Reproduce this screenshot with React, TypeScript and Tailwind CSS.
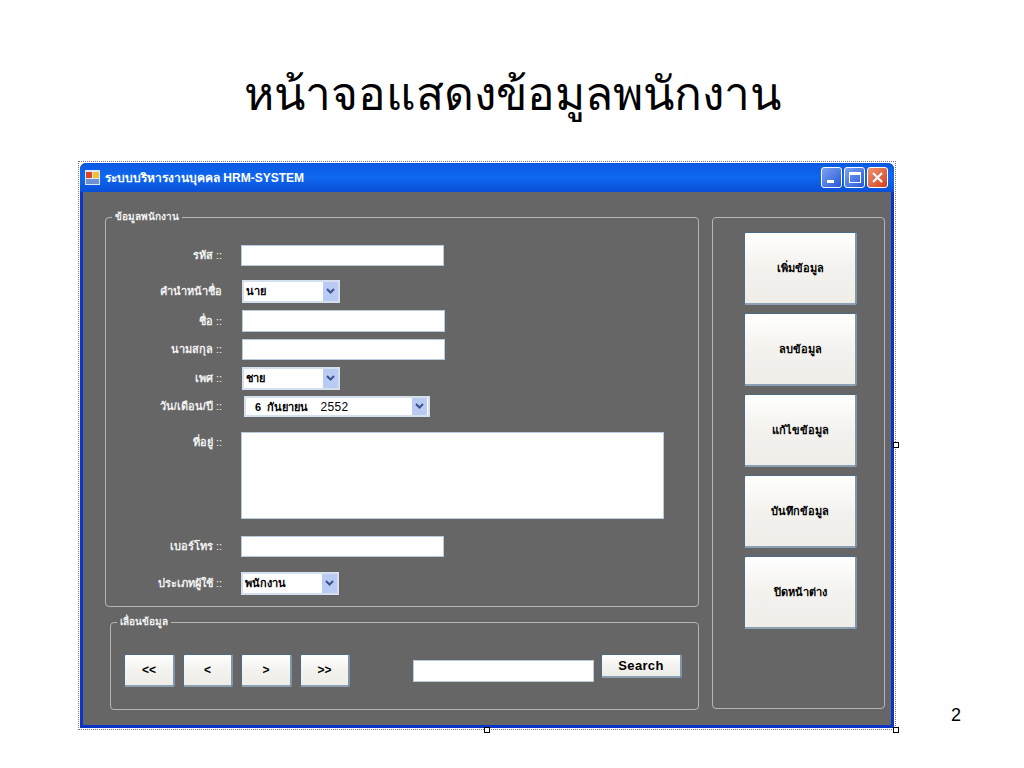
const thai = "font-['Liberation_Sans','Noto_Sans',sans-serif]";

function Chevron() {
  return (
    <svg width="11" height="9" viewBox="0 0 11 9" fill="none">
      <path d="M2 2l3.5 3.5L9 2" stroke="#3a5290" strokeWidth="2" />
    </svg>
  );
}

function TextBox({ className }: { className: string }) {
  return <input readOnly className={`block bg-white border border-[#b9cbe0] ${className}`} />;
}

function Select({ value, className }: { value: string; className: string }) {
  return (
    <div className={`flex items-center justify-between bg-white border-2 border-[#d5e0ee] text-[11px] font-bold text-black ${className}`}>
      <span className="pl-0.5">{value}</span>
      <span className="flex items-center justify-center w-[15px] h-[19px] bg-[#b9cbf2]">
        <Chevron />
      </span>
    </div>
  );
}

function Label({ text, className = "" }: { text: string; className?: string }) {
  return (
    <div className={`w-[116px] text-right text-[11px] font-bold text-[#f2f2f2] whitespace-nowrap ${className}`}>
      {text} <span className="font-normal">::</span>
    </div>
  );
}

function WinButton({ text, className }: { text: string; className: string }) {
  return (
    <button className={`block rounded-[2px] border border-[#4d6b85] border-b-2 border-r-2 border-b-[#8ca0b3] border-r-[#7f96aa] bg-gradient-to-b from-[#ffffff] via-[#f3f2ee] to-[#eeede8] font-bold text-black ${className}`}>
      {text}
    </button>
  );
}

function Handle({ className }: { className: string }) {
  return <div className={`absolute w-[6px] h-[6px] bg-white border border-black ${className}`} />;
}

const sideButtons = ["เพิ่มข้อมูล", "ลบข้อมูล", "แก้ไขข้อมูล", "บันทึกข้อมูล", "ปิดหน้าต่าง"];

export default function App() {
  return (
    <div className={`relative w-[1024px] h-[768px] bg-white overflow-hidden ${thai}`}>
      <h1 className="h-[163px] pt-[65px] text-center text-[46px] leading-[60px] text-black font-normal font-['Liberation_Serif','Noto_Sans',serif]">
        หน้าจอแสดงข้อมูลพนักงาน
      </h1>

      <div className="relative ml-[80px] w-[814px] h-[565px] flex flex-col rounded-t-[6px] bg-[#0a35c8]">
        {/* selection dots + handles of the form designer */}
        <div className="absolute -left-[2px] -top-[2px] w-[818px] h-[569px] border border-dotted border-[#777]" />
        <Handle className="left-[404px] top-[564px]" />
        <Handle className="left-[813px] top-[564px]" />
        <Handle className="left-[813px] top-[279px]" />

        <div className="h-[29px] flex items-center rounded-t-[6px] px-[5px] bg-gradient-to-b from-[#0a5ae0] via-[#0f67f0] to-[#0a4fd6]">
          <svg width="15" height="15" viewBox="0 0 15 15" className="shrink-0">
            <rect x="0" y="0" width="15" height="15" fill="#dfe6f5" />
            <rect x="1" y="2" width="6" height="6" fill="#d8432a" />
            <rect x="8" y="2" width="6" height="6" fill="#f0c030" />
            <rect x="1" y="9" width="13" height="5" fill="#6f8fd0" />
          </svg>
          <span className="ml-[5px] text-[12px] font-bold text-white whitespace-nowrap">ระบบบริหารงานบุคคล HRM-SYSTEM</span>
          <div className="ml-auto flex gap-[2px] mr-[1px]">
            <div className="flex items-end w-[21px] h-[21px] pl-[5px] pb-[4px] rounded-[3px] border border-white bg-gradient-to-br from-[#7da2f0] to-[#2a56d8]">
              <div className="w-[7px] h-[3px] bg-white" />
            </div>
            <div className="flex items-center justify-center w-[21px] h-[21px] rounded-[3px] border border-white bg-gradient-to-br from-[#7da2f0] to-[#2a56d8]">
              <div className="w-[12px] h-[11px] border border-t-[3px] border-white" />
            </div>
            <div className="flex items-center justify-center w-[21px] h-[21px] rounded-[3px] border border-white bg-gradient-to-br from-[#ee8f6c] to-[#d0401c]">
              <svg width="13" height="13" viewBox="0 0 13 13">
                <path d="M2 2l9 9M11 2l-9 9" stroke="#fff" strokeWidth="2.2" />
              </svg>
            </div>
          </div>
        </div>

        <div className="mx-[3px] mb-[3px] flex-1 flex bg-[#666666] pl-[22px]">
          <div className="w-[594px]">
            <fieldset className="mt-[18px] h-[397px] border border-[#b5b5b5] rounded-[4px]">
              <legend className="ml-[6px] px-[3px] text-[10px] leading-[14px] font-bold text-[#f2f2f2]">ข้อมูลพนักงาน</legend>

              <div className="mt-[21px] flex items-center">
                <Label text="รหัส" />
                <TextBox className="ml-[19px] w-[203px] h-[21px]" />
              </div>
              <div className="mt-[14px] flex items-center">
                <Label text="คำนำหน้าชื่อ" className="[&>span]:hidden" />
                <Select value="นาย" className="ml-[20px] w-[98px] h-[23px]" />
              </div>
              <div className="mt-[7px] flex items-center">
                <Label text="ชื่อ" />
                <TextBox className="ml-[20px] w-[203px] h-[22px]" />
              </div>
              <div className="mt-[7px] flex items-center">
                <Label text="นามสกุล" />
                <TextBox className="ml-[20px] w-[203px] h-[21px]" />
              </div>
              <div className="mt-[7px] flex items-center">
                <Label text="เพศ" />
                <Select value="ชาย" className="ml-[20px] w-[98px] h-[23px]" />
              </div>
              <div className="mt-[6px] flex items-center">
                <Label text="วัน/เดือน/ปี" />
                <div className="ml-[22px] w-[186px] h-[21px] flex items-center justify-between bg-white border-2 border-[#d5e0ee] text-[11px] font-bold text-black">
                  <span className="pl-[9px] whitespace-pre">6  กันยายน    <span className="text-[12px] font-normal tracking-wide">2552</span></span>
                  <span className="flex items-center justify-center w-[15px] h-[17px] mr-[1px] bg-[#b9cbf2]">
                    <Chevron />
                  </span>
                </div>
              </div>
              <div className="mt-[15px] flex items-start">
                <Label text="ที่อยู่" className="pt-[2px]" />
                <TextBox className="ml-[19px] w-[423px] h-[87px]" />
              </div>
              <div className="mt-[17px] flex items-center">
                <Label text="เบอร์โทร" />
                <TextBox className="ml-[19px] w-[203px] h-[21px]" />
              </div>
              <div className="mt-[15px] flex items-center">
                <Label text="ประเภทผู้ใช้" />
                <Select value="พนักงาน" className="ml-[19px] w-[98px] h-[23px]" />
              </div>
            </fieldset>

            <fieldset className="ml-[5px] mt-[8px] h-[95px] border border-[#b5b5b5] rounded-[4px]">
              <legend className="ml-[6px] px-[3px] text-[10px] leading-[14px] font-bold text-[#f2f2f2]">เลื่อนข้อมูล</legend>
              <div className="mt-[25px] flex items-center">
                <WinButton text="<<" className="ml-[13px] w-[51px] h-[33px] text-[12px]" />
                <WinButton text="<" className="ml-[8px] w-[50px] h-[33px] text-[12px]" />
                <WinButton text=">" className="ml-[8px] w-[51px] h-[33px] text-[12px]" />
                <WinButton text=">>" className="ml-[8px] w-[50px] h-[33px] text-[12px]" />
                <TextBox className="ml-[63px] w-[181px] h-[22px]" />
                <WinButton text="Search" className="ml-[7px] mb-[9px] w-[81px] h-[24px] text-[13px] tracking-wide" />
              </div>
            </fieldset>
          </div>

          <div className="ml-[13px] mt-[25px] w-[173px] h-[492px] border border-[#b5b5b5] rounded-[4px] pt-[14px] pl-[31px] flex flex-col gap-[8px]">
            {sideButtons.map((label) => (
              <WinButton key={label} text={label} className="w-[113px] h-[73px] text-[11px]" />
            ))}
          </div>
        </div>
      </div>

      <div className="absolute left-[951px] top-[704px] text-[18px] leading-[22px] text-black">2</div>
    </div>
  );
}
